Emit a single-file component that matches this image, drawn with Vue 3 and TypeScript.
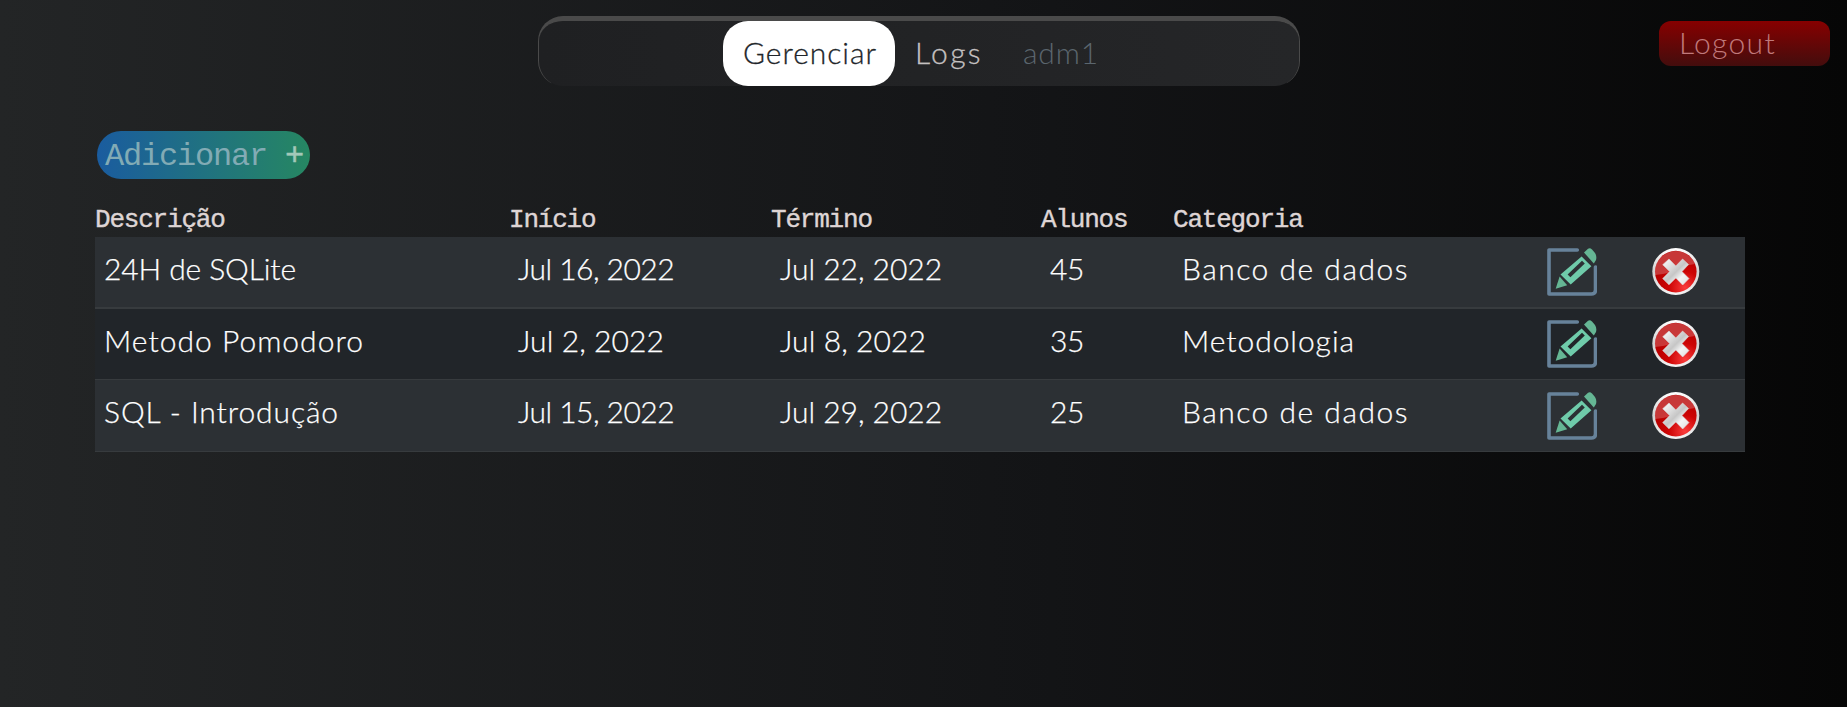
<script setup lang="ts">
import type { Directive } from 'vue'

interface Label {
  text: string
  width: number
}

interface Course {
  id: number
  cells: Label[]
}

const headings: string[] = ['Descrição', 'Início', 'Término', 'Alunos', 'Categoria']

const courses: Course[] = [
  {
    id: 1,
    cells: [
      { text: '24H de SQLite', width: 192 },
      { text: 'Jul 16, 2022', width: 156 },
      { text: 'Jul 22, 2022', width: 162 },
      { text: '45', width: 34 },
      { text: 'Banco de dados', width: 227 },
    ],
  },
  {
    id: 2,
    cells: [
      { text: 'Metodo Pomodoro', width: 260 },
      { text: 'Jul 2, 2022', width: 146 },
      { text: 'Jul 8, 2022', width: 146 },
      { text: '35', width: 34 },
      { text: 'Metodologia', width: 173 },
    ],
  },
  {
    id: 3,
    cells: [
      { text: 'SQL - Introdução', width: 235 },
      { text: 'Jul 15, 2022', width: 156 },
      { text: 'Jul 29, 2022', width: 162 },
      { text: '25', width: 34 },
      { text: 'Banco de dados', width: 227 },
    ],
  },
]

// Spreads the letters of a label evenly until it takes the given width.
const vFit: Directive<HTMLElement, number> = {
  mounted(el, { value }) {
    const count = el.textContent?.length ?? 0
    if (count === 0) return
    const natural = el.getBoundingClientRect().width
    el.style.letterSpacing = `${(value - natural) / count}px`
  },
}
</script>

<template>
  <div class="page">
    <header class="top">
      <nav class="tabs">
        <a class="tab active"><span v-fit="134" class="fit">Gerenciar</span></a>
        <a class="tab"><span v-fit="68" class="fit">Logs</span></a>
        <a class="tab user"><span v-fit="76" class="fit">adm1</span></a>
      </nav>
      <button class="logout"><span v-fit="97" class="fit">Logout</span></button>
    </header>

    <main class="content">
      <button class="add">Adicionar <span class="plus">+</span></button>

      <section class="table">
        <div class="grid head">
          <span v-for="heading in headings" :key="heading">{{ heading }}</span>
        </div>
        <div v-for="course in courses" :key="course.id" class="grid row">
          <div v-for="(cell, i) in course.cells" :key="i" class="cell">
            <span v-fit="cell.width" class="fit">{{ cell.text }}</span>
          </div>
          <div class="icon">
            <svg width="50" height="48" viewBox="0 0 50 48">
              <path
                d="M30.3 2H2v44h42.5q4 0 4-4V19"
                fill="none"
                stroke="#67829a"
                stroke-width="3.6"
                stroke-linecap="round"
                stroke-linejoin="round"
              />
              <path
                fill-rule="evenodd"
                d="M34.6 8.4 44.4 18.2 23.7 36.6 13.5 26.4ZM35 12.8 20.6 26.5 23.4 29.3 37.8 15.6Z"
                fill="#6fcbaa"
              />
              <path d="M12.6 28.6 20.2 37.3 8.7 40.8Z" fill="#65b694" />
              <path d="M37 4.5 41 .8Q43-.5 45 1.5L48 5Q50 8 49 12L46.8 15.6Z" fill="#65b694" />
            </svg>
          </div>
          <div class="icon remove">
            <svg width="48" height="48" viewBox="0 0 48 48">
              <defs>
                <linearGradient id="rim" x1="0" y1="0" x2="0" y2="1">
                  <stop offset="0" stop-color="#ffffff" />
                  <stop offset=".5" stop-color="#d2d2d2" />
                  <stop offset="1" stop-color="#f4f4f4" />
                </linearGradient>
                <radialGradient id="ball" cx=".72" cy=".88" r=".7">
                  <stop offset="0" stop-color="#fa3c3c" />
                  <stop offset=".55" stop-color="#cd0505" />
                  <stop offset="1" stop-color="#b80000" />
                </radialGradient>
                <linearGradient id="cross" x1="0" y1="0" x2="1" y2="1">
                  <stop offset="0" stop-color="#ffffff" />
                  <stop offset=".5" stop-color="#c6c6c6" />
                  <stop offset=".7" stop-color="#f5f5f5" />
                  <stop offset="1" stop-color="#dedede" />
                </linearGradient>
              </defs>
              <circle cx="23.8" cy="23.6" r="23.5" fill="url(#rim)" />
              <circle cx="23.8" cy="23.6" r="20.8" fill="url(#ball)" />
              <path d="M3.2 27A20.8 20.8 0 0 1 43 16Q34 17 27 21T3.2 27Z" fill="#fff" opacity=".22" />
              <path
                d="M17 11 23.8 18 30.6 11 36.5 16.5 30 23.6 37 30.6 30.7 37 23.8 30 17 36.8 10.7 30.6 17.7 23.6 10.7 16.7Z"
                fill="url(#cross)"
                stroke="#dadada"
                stroke-width=".6"
                stroke-linejoin="round"
              />
            </svg>
          </div>
        </div>
      </section>
    </main>
  </div>
</template>

<style>
body {
  margin: 0;
  background: #08080a;
}
</style>

<style scoped>
.page {
  box-sizing: border-box;
  height: 707px;
  overflow: hidden;
  background: linear-gradient(to right, #232526 0%, #131416 57%, #060606 100%);
  font-family: Lato, "Liberation Sans", sans-serif;
  font-weight: 300;
  font-size: 30px;
}

.fit {
  display: inline-block;
  white-space: nowrap;
}

.top {
  display: grid;
  grid-template-columns: 538px 762px 1fr;
  height: 131px;
  padding-top: 16px;
  box-sizing: border-box;
  align-items: start;
}

.tabs {
  grid-column: 2;
  box-sizing: border-box;
  height: 70px;
  display: flex;
  justify-content: flex-start;
  padding-left: 184px;
  border: 1px solid #4a4a4a;
  border-top-width: 5px;
  border-bottom-width: 0;
  border-radius: 25px;
  background: linear-gradient(to right, #1f2022, #252628) padding-box;
}

.tab {
  box-sizing: border-box;
  height: 65px;
  padding: 0 20px;
  line-height: 62px;
  color: #c5c1c1;
  -webkit-text-stroke: 0.3px currentColor;
}

.tab.active {
  width: 172px;
  padding-left: 20px;
  border-radius: 25px;
  background: #fff;
  color: #212529;
}

.tab.user {
  color: #5b666e;
  -webkit-text-stroke: 0;
}

.logout {
  justify-self: end;
  box-sizing: border-box;
  width: 171px;
  height: 45px;
  margin: 5px 17px 0 0;
  padding: 0 0 0 20px;
  border: 0;
  border-radius: 12px;
  background: linear-gradient(#870000, #430d0d);
  color: #c07a7c;
  font: inherit;
  line-height: 43px;
  text-align: left;
}

.logout .fit {
  display: block;
  height: 45px;
  width: max-content;
}

.content {
  padding: 0 102px 0 95px;
}

.add {
  display: block;
  box-sizing: border-box;
  width: 213px;
  height: 48px;
  margin-left: 2px;
  padding: 0 0 0 8px;
  border: 0;
  border-radius: 24px;
  background: linear-gradient(to right, #1a5c9f, #268762);
  color: #82abb5;
  font: 300 32px/51px "Liberation Mono", monospace;
  letter-spacing: -1.2px;
  text-align: left;
  white-space: pre;
}

.plus {
  color: #a3c8b9;
  -webkit-text-stroke: 0.5px #a3c8b9;
}

.table {
  padding-top: 21px;
}

.grid {
  display: grid;
  grid-template-columns: 414px 262px 270px 132px 364px 104px 104px;
}

.head {
  height: 37px;
  color: #ded5d5;
  font: 400 26px/40px "Liberation Mono", monospace;
  letter-spacing: -1.2px;
  -webkit-text-stroke: 0.4px #ded5d5;
}

.row {
  box-sizing: border-box;
  height: 72px;
  border-bottom: 1px solid #373b3e;
  background: #2c3034;
}

.row:nth-child(2) {
  border-bottom-width: 2px;
}

.row:nth-child(3) {
  height: 71px;
  background: #212529;
}

.cell {
  padding-left: 9px;
  color: #fff;
  line-height: 63px;
  -webkit-text-stroke: 0.25px #fff;
}

.icon {
  padding: 11px 0 0 10px;
}

.icon.remove {
  padding-left: 11px;
}

.row:nth-child(4) .icon {
  padding-top: 12px;
}

.icon svg {
  display: block;
}
</style>
